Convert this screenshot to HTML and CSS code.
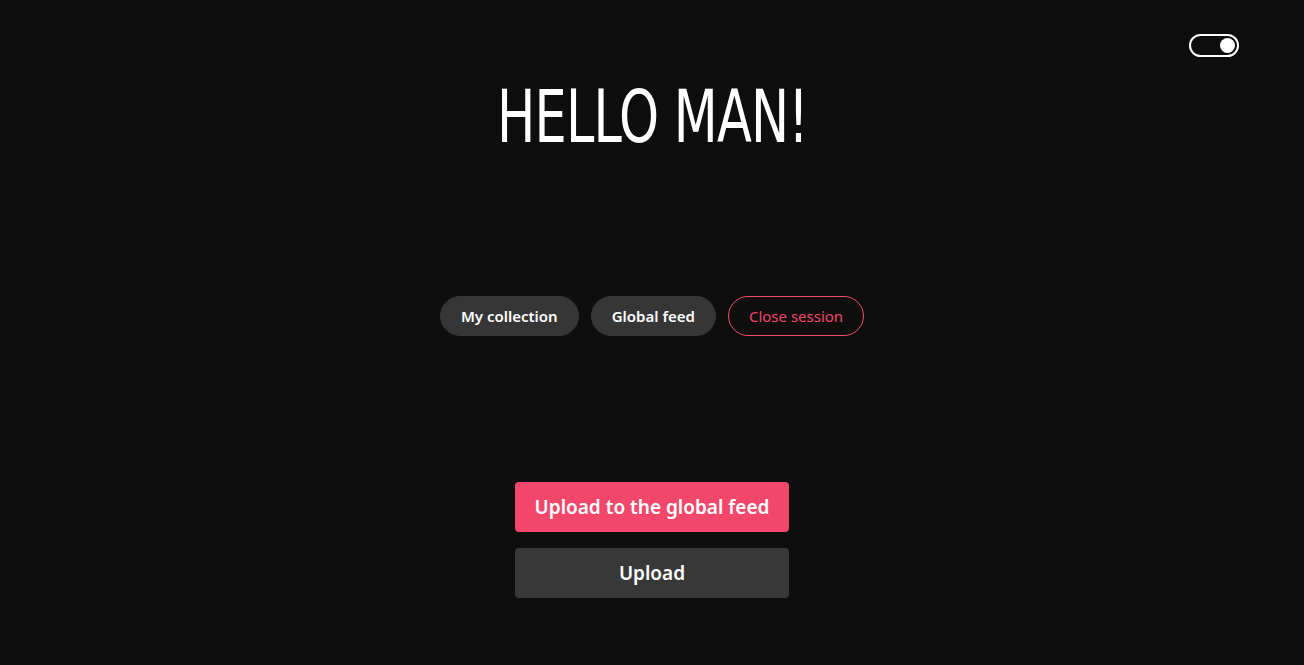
FILE: index.html
```html
<!DOCTYPE html>
<html lang="en">
<head>
<meta charset="utf-8">
<title>Hello</title>
<link rel="stylesheet" href="styles.css">
</head>
<body>
<div class="page">
  <header class="topbar">
    <button class="toggle" aria-label="Toggle theme"><span class="knob"></span></button>
  </header>
  <h1 class="title"><span class="title-text">HELLO MAN!</span></h1>
  <nav class="pills">
    <button class="pill">My collection</button>
    <button class="pill">Global feed</button>
    <button class="pill pill-outline">Close session</button>
  </nav>
  <div class="actions">
    <button class="btn btn-primary">Upload to the global feed</button>
    <button class="btn btn-dark">Upload</button>
  </div>
</div>
</body>
</html>
```
FILE: styles.css
```css
* { box-sizing: border-box; }
html, body { margin: 0; padding: 0; background: #0e0e0e; height: 100%; }
body { font-family: "Noto Sans", "Open Sans", sans-serif; color: #fff; }
.page { display: flex; flex-direction: column; align-items: center; min-height: 665px; }
.topbar { width: 100%; display: flex; justify-content: flex-end; padding: 34px 65px 0 0; height: 57px; }
.toggle { width: 50px; height: 23px; border: 2px solid #fff; border-radius: 12px; background: transparent; padding: 0 2px 0 0; display: flex; align-items: center; justify-content: flex-end; cursor: pointer; }
.knob { width: 15px; height: 15px; border-radius: 50%; background: #fff; display: block; }
.title { margin: 20px 0 0; height: 100px; font-family: "DejaVu Sans Condensed", "DejaVu Sans", sans-serif; font-weight: 400; font-size: 73px; line-height: 80px; letter-spacing: -1px; }
.title-text { display: inline-block; transform: scaleX(0.775); }
.pills { display: flex; gap: 12px; margin-top: 119px; }
.pill { height: 40px; padding: 0 20px; border-radius: 20px; border: 1px solid #363636; background: #363636; color: #fff; font-family: inherit; font-weight: 600; font-size: 15px; cursor: pointer; }
.pill-outline { background: transparent; border-color: #f2476b; color: #f2476b; font-weight: 400; }
.actions { display: flex; flex-direction: column; gap: 16px; margin-top: 146px; }
.btn { width: 274px; height: 50px; border: none; border-radius: 4px; color: #fff; font-family: inherit; font-weight: 600; font-size: 19px; cursor: pointer; }
.btn-primary { background: #f2476b; }
.btn-dark { background: #383838; }
```
